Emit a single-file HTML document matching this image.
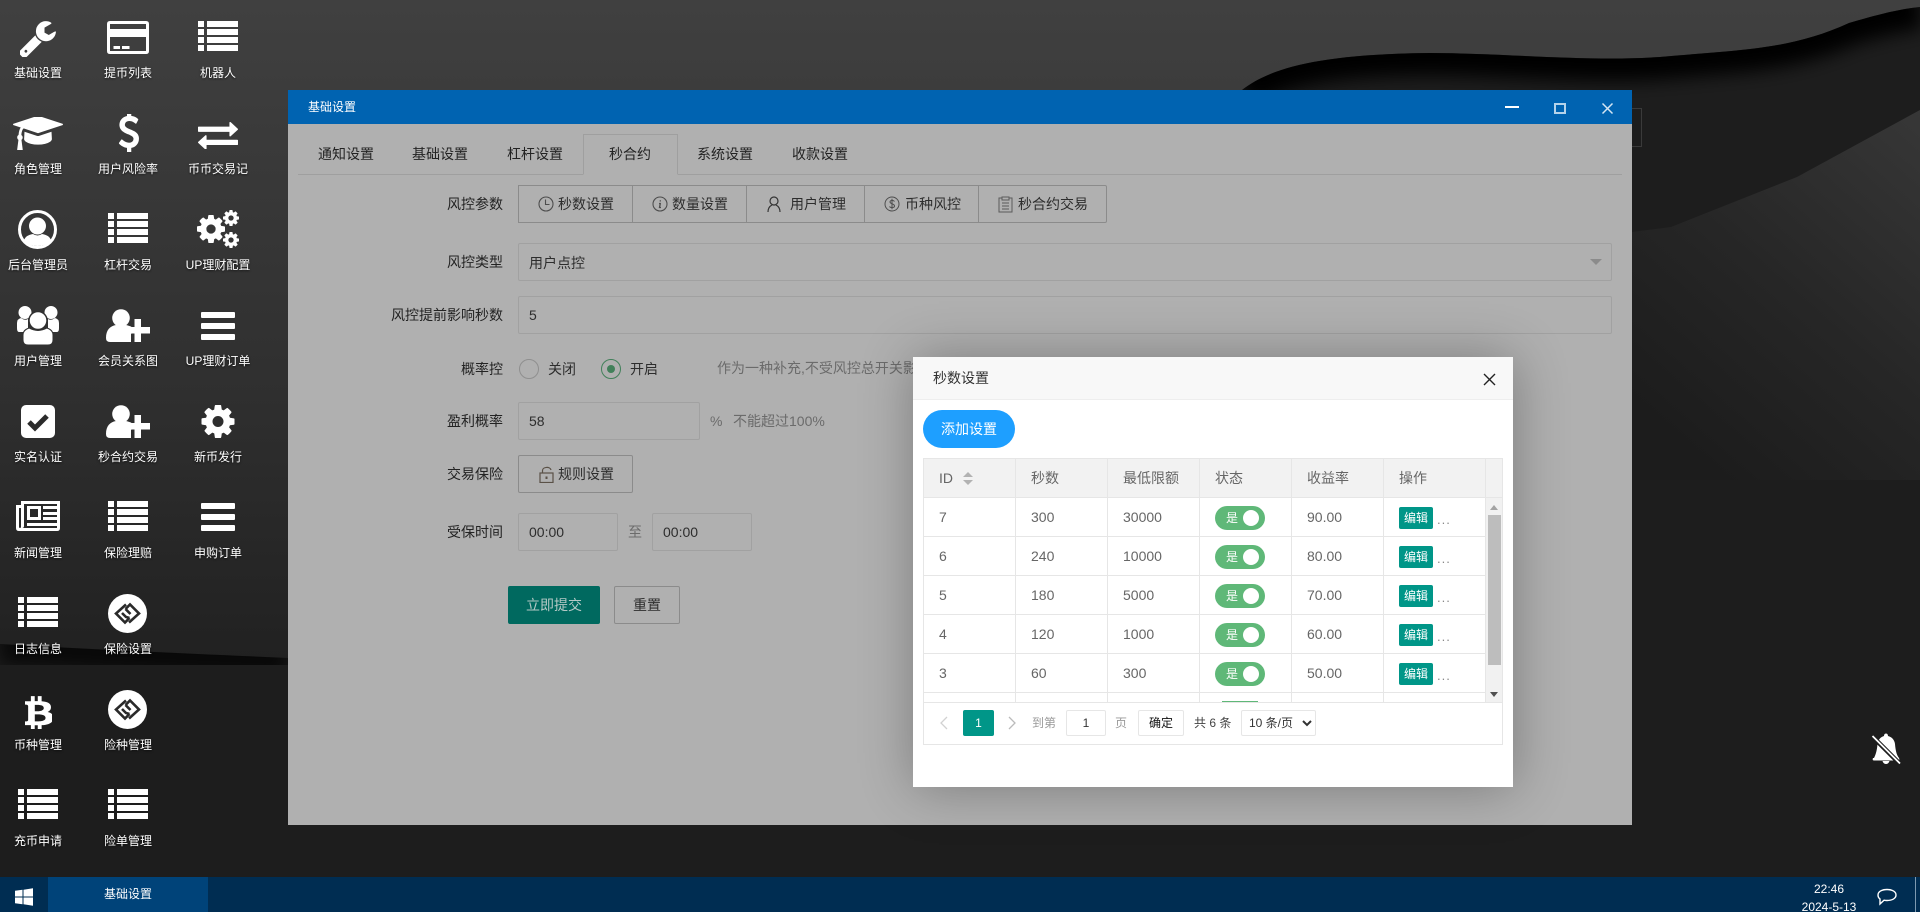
<!DOCTYPE html>
<html lang="zh-CN">
<head>
<meta charset="utf-8">
<title>基础设置</title>
<style>
html,body{margin:0;padding:0;width:1920px;height:912px;overflow:hidden;background:#1c1c1c;}
body{position:relative;font-family:"Liberation Sans","Noto Sans CJK SC",sans-serif;font-size:14px;color:#222;}
div,span,select{box-sizing:border-box;}
.a,.t,.l{position:absolute;}
.t{white-space:nowrap;line-height:20px;height:20px;}
.l{width:90px;text-align:center;font-size:12px;line-height:20px;height:20px;color:#fff;white-space:nowrap;text-shadow:0 1px 2px rgba(0,0,0,.7);}
.lab{color:#232323;width:200px;text-align:right;left:303px;}
.inp{position:absolute;border:1px solid #a1a1a1;height:38px;border-radius:2px;}
.tab{color:#232323;}
.gb{position:absolute;top:185px;height:38px;border:1px solid #8b8b8b;border-left:none;}
.c{position:absolute;color:#666;line-height:20px;height:20px;white-space:nowrap;}
.vl{position:absolute;width:1px;background:#e6e6e6;}
.hl{position:absolute;height:1px;background:#e6e6e6;left:924px;width:562px;}
.sw{position:absolute;left:1215px;width:50px;height:24px;border-radius:20px;background:#5fb878;color:#fff;font-size:12px;line-height:24px;padding-left:11px;}
.sw i{position:absolute;left:28px;top:4px;width:16px;height:16px;border-radius:50%;background:#fff;}
.ed{position:absolute;left:1399px;width:34px;height:22px;border-radius:2px;background:#009688;color:#fff;font-size:12px;line-height:22px;text-align:center;}
.dots{position:absolute;left:1437px;color:#888;font-size:13px;line-height:20px;height:20px;letter-spacing:1px;}
.p12{position:absolute;font-size:12px;line-height:26px;height:26px;white-space:nowrap;}
</style>
</head>
<body>

<!-- wallpaper -->
<svg class="a" style="left:0;top:0" width="1920" height="877" viewBox="0 0 1920 877">
<defs>
<linearGradient id="g1" x1="0" y1="0" x2="0" y2="660" gradientUnits="userSpaceOnUse"><stop offset="0" stop-color="#404040"/><stop offset=".6" stop-color="#2f2f2f"/><stop offset="1" stop-color="#212121"/></linearGradient>
<linearGradient id="g2" x1="1920" y1="110" x2="1650" y2="420" gradientUnits="userSpaceOnUse"><stop offset="0" stop-color="#373737"/><stop offset=".55" stop-color="#262626"/><stop offset="1" stop-color="#1c1c1c"/></linearGradient>
<clipPath id="cp"><path d="M0 644C100 650 200 654 288 658L1100 300L1242 90C1270 68 1320 54 1430 53C1500 53 1590 62 1660 57C1740 50 1790 50 1849 23C1880 14 1900 9 1920 7V877H0Z"/></clipPath>
<filter id="bl" x="-10%" y="-50%" width="120%" height="200%"><feGaussianBlur stdDeviation="9"/></filter>
</defs>
<rect width="1920" height="877" fill="url(#g1)"/>
<path d="M0 644C100 650 200 654 288 658L1100 300L1242 90C1270 68 1320 54 1430 53C1500 53 1590 62 1660 57C1740 50 1790 50 1849 23C1880 14 1900 9 1920 7V877H0Z" fill="#1d1d1d"/>
<g clip-path="url(#cp)">
<path d="M0 644C100 650 200 654 288 658" fill="none" stroke="#000" stroke-width="40" filter="url(#bl)" opacity=".7"/>
<path d="M1242 90C1270 68 1320 54 1430 53C1500 53 1590 62 1660 57C1740 50 1790 50 1849 23C1880 14 1900 9 1920 7" fill="none" stroke="#000" stroke-width="44" filter="url(#bl)"/>
</g>
<path d="M1920 110L1797 177L1671 227L1632 232V480H1920Z" fill="url(#g2)"/>
<rect x="1630" y="108.500" width="11.500" height="38" fill="none" stroke="#3a3a3a"/>
</svg>

<!-- desktop icons -->
<svg class="a" style="left:0;top:0" width="288" height="877" viewBox="0 0 288 877" fill="#fff">
<defs>
<symbol id="list" viewBox="0 0 40 30"><path d="M0 0h6v6H0zM9 0h31v6H9zM0 8h6v6H0zM9 8h31v6H9zM0 16h6v6H0zM9 16h31v6H9zM0 24h6v6H0zM9 24h31v6H9z"/></symbol>
<symbol id="bars" viewBox="0 0 34 28"><rect y="0" width="34" height="6" rx="1"/><rect y="11" width="34" height="6" rx="1"/><rect y="22" width="34" height="6" rx="1"/></symbol>
<symbol id="cog" viewBox="128 128 1536 1536"><path d="M1152 896q0-106-75-181t-181-75-181 75-75 181 75 181 181 75 181-75 75-181zm512-109v222q0 12-8 23t-20 13l-185 28q-19 54-39 91 35 50 107 138 10 12 10 25t-9 23q-27 37-99 108t-94 71q-12 0-26-9l-138-108q-44 23-91 38-16 136-29 186-7 28-36 28h-222q-14 0-24.500-8.500t-11.500-21.500l-28-184q-49-16-90-37l-141 107q-10 9-25 9-14 0-25-11-126-114-165-168-7-10-7-23 0-12 8-23 15-21 51-66.500t54-70.500q-27-50-41-99l-183-27q-13-2-21-12.500t-8-23.500v-222q0-12 8-23t19-13l186-28q14-46 39-92-40-57-107-138-10-12-10-24 0-10 9-23 26-36 98.500-107.500t94.500-71.500q13 0 26 10l138 107q44-23 91-38 16-136 29-186 7-28 36-28h222q14 0 24.500 8.500t11.500 21.500l28 184q49 16 90 37l142-107q9-9 24-9 13 0 25 10 129 119 165 170 7 8 7 22 0 12-8 23-15 21-51 66.500t-54 70.500q26 50 41 98l183 28q13 2 21 12.500t8 23.500z"/></symbol>
<symbol id="uplus" viewBox="0 0 44 33"><circle cx="15" cy="9" r="8.800"/><path d="M0 29C0 21 4 17 10 16Q15 19 20 16C24 17 27 18 29 21L25 25V33H4Q0 33 0 29Z"/><path d="M28.500 10h6.500v8h9v6.500h-9V33H28.500V24.500H20V18h8.500z"/></symbol>
<symbol id="chain" viewBox="0 0 39 39"><circle cx="19.500" cy="19.500" r="19.500"/><g fill="none" stroke="#2a2a2a" stroke-width="2.600"><path d="M18 10.500L8 19.500L17 28.500L21.500 24"/><path d="M21 28.500L31 19.500L22 10.500L17.500 15"/><path d="M17.500 15L22.500 20"/><path d="M14 19L18 23L21.500 24"/></g></symbol>
</defs>

<svg x="20" y="21" width="36" height="36" viewBox="120 120 1610 1610"><path d="M448 1472q0-26-19-45t-45-19-45 19-19 45 19 45 45 19 45-19 19-45zm644-420l-682 682q-37 37-90 37-52 0-91-37l-106-108q-38-36-38-90 0-53 38-91l681-681q39 98 114.500 173.500t173.500 114.500zm634-435q0 39-23 106-47 134-164.500 217.500t-258.500 83.500q-185 0-316.500-131.500t-131.500-316.500 131.500-316.500 316.500-131.500q58 0 121.500 16.500t107.500 46.500q16 11 16 28t-16 28l-293 169v224l193 107q5-3 79-48.500t135.500-81 70.500-35.500q15 0 23.500 10t8.500 25z"/></svg>

<svg x="107" y="21" width="42" height="33" viewBox="0 0 42 33"><path fill-rule="evenodd" d="M3 0h36q3 0 3 3v27q0 3-3 3H3q-3 0-3-3V3q0-3 3-3zM3 3v5h36V3zM3 16v14h36V16z"/><path d="M6.500 25h6.500v3H6.500zM15 25h7.500v3H15z"/></svg>
<use href="#list" x="198" y="21" width="40" height="30"/>

<svg x="13" y="117" width="50" height="33" viewBox="0 128 2304 1536" preserveAspectRatio="none"><path d="M1774 836l18 316q4 69-82 128t-235 93.500-323 34.500-323-34.500-235-93.500-82-128l18-316 574 181q22 7 48 7t48-7zm530-324q0 23-22 31l-1120 352q-4 1-10 1t-10-1l-652-206q-43 34-71 111.500t-34 178.500q63 36 63 109 0 69-58 107l58 433q2 14-8 25-9 11-24 11h-192q-15 0-24-11-10-11-8-25l58-433q-58-38-58-107 0-73 65-111 11-207 98-330l-333-104q-22-8-22-31t22-31l1120-352q4-1 10-1t10 1l1120 352q22 8 22 31z" transform="translate(0,-64) scale(1,1.05)"/></svg>
<svg x="117" y="114" width="22" height="38" viewBox="340 128 1024 1632" preserveAspectRatio="none"><path d="M1362 1185q0 153-99.500 263.500t-258.500 136.500v175q0 14-9 23t-23 9h-135q-13 0-22.500-9.500t-9.500-22.500v-175q-66-9-127.500-31t-101.500-44.500-74-48-46.500-37.500-17.500-18q-17-21-2-41l103-135q7-10 23-12 15-2 24 9l2 2q113 99 243 125 37 8 74 8 81 0 142.500-43t61.500-122q0-28-15-53t-33.500-42-58.500-37.500-66-32-80-32.500q-39-16-61.500-25t-61.500-26.500-62.500-31-56.500-35.500-53.500-42.500-43.500-49-35.500-58-21-66.500-8.500-78q0-138 98-242t255-134v-180q0-13 9.500-22.500t22.500-9.500h135q14 0 23 9t9 23v176q57 6 110.500 23t87 33.500 63.500 37.500 39 29 15 14q17 18 5 38l-81 146q-8 15-23 16-14 3-27-7-3-3-14.500-12t-39-26.500-58.500-32-74.500-26-85.500-11.500q-95 0-155 43t-60 111q0 26 8.500 48t29.500 41.500 39.500 33 56 31 60.500 27 70 27.500q53 20 81 31.500t76 35 75.500 42.500 62 50 53 63.500 31.500 76.500 13 94z"/></svg>
<svg x="198" y="120" width="40" height="29" viewBox="0 192 1792 1408" preserveAspectRatio="none"><path d="M1792 1184v192q0 13-9.500 22.500t-22.500 9.500h-1376v192q0 13-9.500 22.500t-22.500 9.500q-12 0-24-10l-319-320q-9-9-9-22 0-14 9-23l320-320q9-9 23-9 13 0 22.500 9.500t9.500 22.500v192h1376q13 0 22.500 9.500t9.500 22.500zm0-544q0 14-9 23l-320 320q-9 9-23 9-13 0-22.500-9.500t-9.500-22.500v-192h-1376q-13 0-22.500-9.500t-9.500-22.500v-192q0-13 9.500-22.500t22.500-9.500h1376v-192q0-14 9-23t23-9q12 0 24 10l319 319q9 9 9 23z"/></svg>

<svg x="18" y="210" width="39" height="39" viewBox="0 0 39 39"><circle cx="19.500" cy="19.500" r="18" fill="none" stroke="#fff" stroke-width="3"/><circle cx="19.500" cy="16" r="8.500"/><path d="M6 30.500C7 26.500 10 25 15 24Q19.500 27 24 24C29 25 32 26.500 33 30.500C29.500 34 25 36 19.500 36S9.500 34 6 30.500Z"/></svg>
<use href="#list" x="108" y="213" width="40" height="30"/>
<use href="#cog" x="197" y="215" width="28" height="28"/>
<use href="#cog" x="223" y="210" width="16" height="16"/>
<use href="#cog" x="223" y="232" width="16" height="16"/>

<svg x="17" y="306" width="42" height="39" viewBox="0 0 42 39"><circle cx="8" cy="6.500" r="6.500"/><circle cx="34" cy="6.500" r="6.500"/><path d="M0 22V17Q0 13 4 12Q8 15 11 13L11 26H2Q0 26 0 22ZM42 22V17Q42 13 38 12Q34 15 31 13L31 26H40Q42 26 42 22Z"/><circle cx="21" cy="14.500" r="9" stroke="#303030" stroke-width="1.500"/><path d="M6 34V29Q6 24 12 22Q21 27 30 22Q36 24 36 29V34Q36 39 31 39H11Q6 39 6 34Z" stroke="#303030" stroke-width="1"/></svg>
<use href="#uplus" x="106" y="309" width="44" height="33"/>
<use href="#bars" x="201" y="312" width="34" height="28"/>

<svg x="21" y="405" width="34" height="33" viewBox="0 0 34 33"><rect width="34" height="33" rx="5"/><path d="M8 17L14 23L26 11" fill="none" stroke="#2b2b2b" stroke-width="5"/></svg>
<use href="#uplus" x="106" y="405" width="44" height="33"/>
<use href="#cog" x="201" y="405" width="34" height="33"/>

<svg x="16" y="501" width="44" height="30" viewBox="0 0 44 30"><path fill-rule="evenodd" d="M6 0H44V27Q44 30 41 30H3Q0 30 0 27V4H5V0H6ZM8 3V25Q8 27 6 27H41V3ZM3 7V26Q3 27 4 27Q5 27 5 26V7Z"/><path fill-rule="evenodd" d="M11 5H25V19H11ZM14 8V16H22V8Z"/><path d="M27 5H41V8H27ZM27 11H41V14H27ZM27 16H41V19H27ZM11 22H41V25H11Z"/></svg>
<use href="#list" x="108" y="501" width="40" height="30"/>
<use href="#bars" x="201" y="503" width="34" height="28"/>

<use href="#list" x="18" y="597" width="40" height="30"/>
<use href="#chain" x="108" y="594" width="39" height="39"/>

<svg x="25" y="692" width="27" height="37" viewBox="130 0 1080 1792" preserveAspectRatio="none"><path d="M1167 709q18 182-131 258 117 28 175 103t45 214q-7 71-32.500 125t-64.500 89-97 58.500-121.500 34.500-145.500 15v255h-154v-251q-80 0-122-1v252h-154v-255q-18 0-54-.5t-55-.5h-200l31-183h111q50 0 58-51v-402h16q-6-1-16-1v-287q-13-68-89-68h-111v-164l212 1q64 0 97-1v-252h154v247q82-2 122-2v-245h154v252q79 7 140 22.500t113 45 82.500 78 36.500 114.500zm-215 545q0-36-15-64t-37-46-57.500-30.500-65.500-18.500-74-9-69-3-64.500 1-47.500 1v338q8 0 37 .5t48 .5 53-1.500 58.500-4 57-8.500 55.500-14 47.500-21 39.500-30 24.500-40 9.500-51zm-71-476q0-33-12.500-58.500t-30.500-42-48-28-55-16.500-61.500-8-58-2.500-54 1-39.500.5v307q5 0 34.500.5t46.500 0 50-2 55-5.500 51.500-11 48.500-18.500 37-27 27-38.500 9-51z"/></svg>
<use href="#chain" x="108" y="690" width="39" height="39"/>

<use href="#list" x="18" y="789" width="40" height="30"/>
<use href="#list" x="108" y="789" width="40" height="30"/>
</svg>

<div class="l" style="left:-7px;top:63px">基础设置</div><div class="l" style="left:83px;top:63px">提币列表</div><div class="l" style="left:173px;top:63px">机器人</div>
<div class="l" style="left:-7px;top:159px">角色管理</div><div class="l" style="left:83px;top:159px">用户风险率</div><div class="l" style="left:173px;top:159px">币币交易记</div>
<div class="l" style="left:-7px;top:255px">后台管理员</div><div class="l" style="left:83px;top:255px">杠杆交易</div><div class="l" style="left:173px;top:255px">UP理财配置</div>
<div class="l" style="left:-7px;top:351px">用户管理</div><div class="l" style="left:83px;top:351px">会员关系图</div><div class="l" style="left:173px;top:351px">UP理财订单</div>
<div class="l" style="left:-7px;top:447px">实名认证</div><div class="l" style="left:83px;top:447px">秒合约交易</div><div class="l" style="left:173px;top:447px">新币发行</div>
<div class="l" style="left:-7px;top:543px">新闻管理</div><div class="l" style="left:83px;top:543px">保险理赔</div><div class="l" style="left:173px;top:543px">申购订单</div>
<div class="l" style="left:-7px;top:639px">日志信息</div><div class="l" style="left:83px;top:639px">保险设置</div>
<div class="l" style="left:-7px;top:735px">币种管理</div><div class="l" style="left:83px;top:735px">险种管理</div>
<div class="l" style="left:-7px;top:831px">充币申请</div><div class="l" style="left:83px;top:831px">险单管理</div>

<!-- window -->
<div class="a" style="left:288px;top:90px;width:1344px;height:735px;background:#b0b0b0"></div>
<div class="a" style="left:288px;top:90px;width:1344px;height:34px;background:#0063b1"></div>
<div class="t" style="left:308px;top:97px;font-size:12px;color:#fff">基础设置</div>
<div class="a" style="left:1505px;top:106px;width:14px;height:2px;background:#fff"></div>
<div class="a" style="left:1554px;top:103px;width:12px;height:11px;border:2px solid #b5d3ea"></div>
<svg class="a" style="left:1601px;top:102px" width="13" height="13" viewBox="0 0 13 13"><path d="M1.500 1.500L11.500 11.500M11.500 1.500L1.500 11.500" stroke="#d5e6f3" stroke-width="1.500" fill="none"/></svg>

<!-- tabs -->
<div class="a" style="left:298px;top:174px;width:1324px;height:1px;background:#9f9f9f"></div>
<div class="a" style="left:583px;top:134px;width:95px;height:41px;border:1px solid #9f9f9f;border-bottom:1px solid #b0b0b0;background:#b0b0b0"></div>
<div class="t tab" style="left:318px;top:144px">通知设置</div>
<div class="t tab" style="left:412px;top:144px">基础设置</div>
<div class="t tab" style="left:507px;top:144px">杠杆设置</div>
<div class="t tab" style="left:609px;top:144px">秒合约</div>
<div class="t tab" style="left:697px;top:144px">系统设置</div>
<div class="t tab" style="left:792px;top:144px">收款设置</div>

<!-- form -->
<div class="t lab" style="top:194px">风控参数</div>
<div class="a" style="left:518px;top:185px;width:1px;height:38px;background:#8b8b8b"></div>
<div class="gb" style="left:519px;width:114px"></div>
<div class="gb" style="left:633px;width:114px"></div>
<div class="gb" style="left:747px;width:118px"></div>
<div class="gb" style="left:865px;width:114px"></div>
<div class="gb" style="left:979px;width:128px;border-radius:0 2px 2px 0"></div>
<svg class="a" style="left:538px;top:196px" width="16" height="16" viewBox="0 0 16 16" fill="none" stroke="#4d4d4d" stroke-width="1.100"><circle cx="8" cy="8" r="7"/><path d="M7.500 3.500V8.500H11.500"/></svg>
<div class="t" style="left:558px;top:194px;color:#2d2d2d">秒数设置</div>
<svg class="a" style="left:652px;top:196px" width="16" height="16" viewBox="0 0 16 16" fill="none" stroke="#4d4d4d" stroke-width="1.100"><circle cx="8" cy="8" r="7"/><path d="M8.300 4.300V5.500M7 7.500H8.300L7.500 11.500H9" stroke-width="1.300"/></svg>
<div class="t" style="left:672px;top:194px;color:#2d2d2d">数量设置</div>
<svg class="a" style="left:766px;top:196px" width="16" height="16" viewBox="0 0 16 16" fill="none" stroke="#333" stroke-width="1.200"><circle cx="8" cy="5" r="4"/><path d="M2 16C2 12 4 10 6 9M14 16C14 12 12 10 10 9"/></svg>
<div class="t" style="left:790px;top:194px;color:#2d2d2d">用户管理</div>
<svg class="a" style="left:884px;top:196px" width="16" height="16" viewBox="0 0 16 16" fill="none" stroke="#4d4d4d" stroke-width="1"><circle cx="8" cy="8" r="7"/><path d="M10.500 5.500C9.500 4 6 4 6 6C6 8 10.500 7.500 10.500 10C10.500 12 6.500 12 5.500 10.500M8 2.800V13.200"/></svg>
<div class="t" style="left:905px;top:194px;color:#2d2d2d">币种风控</div>
<svg class="a" style="left:998px;top:196px" width="15" height="17" viewBox="0 0 15 17" fill="none" stroke="#5a5a5a" stroke-width="1"><path d="M4 2H1V16H14V2H11M4 1H11V4H4ZM4 7H11M4 10H11M4 13H11"/></svg>
<div class="t" style="left:1018px;top:194px;color:#2d2d2d">秒合约交易</div>

<div class="t lab" style="top:252px">风控类型</div>
<div class="inp" style="left:518px;top:243px;width:1094px"></div>
<div class="t" style="left:529px;top:253px;color:#2d2d2d">用户点控</div>
<div class="a" style="left:1590px;top:259px;border:6px solid transparent;border-top:6px solid #8b8b8b;border-bottom:none"></div>

<div class="t lab" style="top:305px">风控提前影响秒数</div>
<div class="inp" style="left:518px;top:296px;width:1094px"></div>
<div class="t" style="left:529px;top:305px;color:#2d2d2d">5</div>

<div class="t lab" style="top:359px">概率控</div>
<div class="a" style="left:519px;top:359px;width:20px;height:20px;border-radius:50%;border:1.500px solid #8f8f8f"></div>
<div class="t" style="left:548px;top:359px;color:#2d2d2d">关闭</div>
<div class="a" style="left:601px;top:359px;width:20px;height:20px;border-radius:50%;border:1.500px solid #42805a"></div>
<div class="a" style="left:607px;top:365px;width:8px;height:8px;border-radius:50%;background:#42805a"></div>
<div class="t" style="left:630px;top:359px;color:#2d2d2d">开启</div>
<div class="t" style="left:717px;top:358px;color:#6b6b6b;width:200px;overflow:hidden">作为一种补充,不受风控总开关影响</div>

<div class="t lab" style="top:411px">盈利概率</div>
<div class="inp" style="left:518px;top:402px;width:182px"></div>
<div class="t" style="left:529px;top:411px;color:#2d2d2d">58</div>
<div class="t" style="left:710px;top:411px;color:#6b6b6b">%</div>
<div class="t" style="left:733px;top:411px;color:#6b6b6b">不能超过100%</div>

<div class="t lab" style="top:464px">交易保险</div>
<div class="inp" style="left:518px;top:455px;width:115px;border-color:#8b8b8b"></div>
<svg class="a" style="left:539px;top:466px" width="15" height="17" viewBox="0 0 15 17" fill="none" stroke="#5a5147" stroke-width="1.200"><rect x="1" y="7" width="13" height="9.500"/><path d="M3.500 7V4.500C3.500 1 11 0 12 4"/><path d="M7.500 10.500V13" stroke-width="2"/></svg>
<div class="t" style="left:558px;top:464px;color:#2d2d2d">规则设置</div>

<div class="t lab" style="top:522px">受保时间</div>
<div class="inp" style="left:518px;top:513px;width:100px"></div>
<div class="t" style="left:529px;top:522px;color:#2d2d2d">00:00</div>
<div class="t" style="left:628px;top:522px;color:#6b6b6b">至</div>
<div class="inp" style="left:652px;top:513px;width:100px"></div>
<div class="t" style="left:663px;top:522px;color:#2d2d2d">00:00</div>

<div class="a" style="left:508px;top:586px;width:92px;height:38px;border-radius:2px;background:#00695f;color:#b5c9c6;text-align:center;line-height:38px">立即提交</div>
<div class="a" style="left:614px;top:586px;width:66px;height:38px;border-radius:2px;border:1px solid #8b8b8b;color:#2d2d2d;text-align:center;line-height:36px">重置</div>

<!-- modal -->
<div class="a" style="left:913px;top:357px;width:600px;height:430px;background:#fff;box-shadow:1px 1px 50px rgba(0,0,0,.3)"></div>
<div class="a" style="left:913px;top:357px;width:600px;height:43px;background:#f8f8f8;border-bottom:1px solid #eee"></div>
<div class="t" style="left:933px;top:368px;color:#333">秒数设置</div>
<svg class="a" style="left:1483px;top:373px" width="13" height="13" viewBox="0 0 13 13"><path d="M1 1L12 12M12 1L1 12" stroke="#222" stroke-width="1.400" fill="none"/></svg>
<div class="a" style="left:923px;top:410px;width:92px;height:38px;border-radius:19px;background:#1e9fff;color:#fff;text-align:center;line-height:38px">添加设置</div>

<!-- table -->
<div class="a" style="left:923px;top:458px;width:580px;height:287px;border:1px solid #e6e6e6"></div>
<div class="a" style="left:924px;top:459px;width:578px;height:39px;background:#f2f2f2;border-bottom:1px solid #e6e6e6"></div>
<div class="a" style="left:1486px;top:498px;width:16px;height:204px;background:#f1f1f1"></div>
<div class="a" style="left:1488px;top:515px;width:13px;height:150px;background:#bdbdbd"></div>
<div class="a" style="left:1490px;top:505px;border:4px solid transparent;border-bottom:5px solid #a3a3a3;border-top:none"></div>
<div class="a" style="left:1490px;top:692px;border:4px solid transparent;border-top:5px solid #505050;border-bottom:none"></div>

<div class="vl" style="left:1015px;top:459px;height:243px"></div>
<div class="vl" style="left:1107px;top:459px;height:243px"></div>
<div class="vl" style="left:1199px;top:459px;height:243px"></div>
<div class="vl" style="left:1291px;top:459px;height:243px"></div>
<div class="vl" style="left:1383px;top:459px;height:243px"></div>
<div class="vl" style="left:1485px;top:459px;height:243px"></div>
<div class="hl" style="top:536px"></div><div class="hl" style="top:575px"></div><div class="hl" style="top:614px"></div><div class="hl" style="top:653px"></div><div class="hl" style="top:692px"></div>
<div class="a" style="left:924px;top:702px;width:578px;height:1px;background:#e6e6e6"></div>

<div class="c" style="left:939px;top:468px">ID</div>
<div class="a" style="left:963px;top:472px;border:5px solid transparent;border-bottom:5px solid #b2b2b2;border-top:none"></div>
<div class="a" style="left:963px;top:480px;border:5px solid transparent;border-top:5px solid #b2b2b2;border-bottom:none"></div>
<div class="c" style="left:1031px;top:468px">秒数</div>
<div class="c" style="left:1123px;top:468px">最低限额</div>
<div class="c" style="left:1215px;top:468px">状态</div>
<div class="c" style="left:1307px;top:468px">收益率</div>
<div class="c" style="left:1399px;top:468px">操作</div>

<div class="c" style="left:939px;top:507px">7</div><div class="c" style="left:1031px;top:507px">300</div><div class="c" style="left:1123px;top:507px">30000</div><div class="sw" style="top:506px">是<i></i></div><div class="c" style="left:1307px;top:507px">90.00</div><div class="ed" style="top:507px">编辑</div><div class="dots" style="top:510px">...</div>
<div class="c" style="left:939px;top:546px">6</div><div class="c" style="left:1031px;top:546px">240</div><div class="c" style="left:1123px;top:546px">10000</div><div class="sw" style="top:545px">是<i></i></div><div class="c" style="left:1307px;top:546px">80.00</div><div class="ed" style="top:546px">编辑</div><div class="dots" style="top:549px">...</div>
<div class="c" style="left:939px;top:585px">5</div><div class="c" style="left:1031px;top:585px">180</div><div class="c" style="left:1123px;top:585px">5000</div><div class="sw" style="top:584px">是<i></i></div><div class="c" style="left:1307px;top:585px">70.00</div><div class="ed" style="top:585px">编辑</div><div class="dots" style="top:588px">...</div>
<div class="c" style="left:939px;top:624px">4</div><div class="c" style="left:1031px;top:624px">120</div><div class="c" style="left:1123px;top:624px">1000</div><div class="sw" style="top:623px">是<i></i></div><div class="c" style="left:1307px;top:624px">60.00</div><div class="ed" style="top:624px">编辑</div><div class="dots" style="top:627px">...</div>
<div class="c" style="left:939px;top:663px">3</div><div class="c" style="left:1031px;top:663px">60</div><div class="c" style="left:1123px;top:663px">300</div><div class="sw" style="top:662px">是<i></i></div><div class="c" style="left:1307px;top:663px">50.00</div><div class="ed" style="top:663px">编辑</div><div class="dots" style="top:666px">...</div>
<div class="a" style="left:1215px;top:701px;width:50px;height:1px;background:#5fb878;clip-path:inset(0 7px)"></div>

<!-- pager -->
<svg class="a" style="left:939px;top:716px" width="10" height="14" viewBox="0 0 10 14"><path d="M8 1L2 7L8 13" fill="none" stroke="#d2d2d2" stroke-width="1.300"/></svg>
<div class="p12" style="left:963px;top:710px;width:31px;background:#009688;color:#fff;text-align:center;border-radius:2px">1</div>
<svg class="a" style="left:1007px;top:716px" width="10" height="14" viewBox="0 0 10 14"><path d="M2 1L8 7L2 13" fill="none" stroke="#bbb" stroke-width="1.300"/></svg>
<div class="p12" style="left:1032px;top:710px;color:#999">到第</div>
<div class="p12" style="left:1066px;top:710px;width:40px;border:1px solid #e6e6e6;border-radius:2px;text-align:center;line-height:24px;color:#333">1</div>
<div class="p12" style="left:1115px;top:710px;color:#999">页</div>
<div class="p12" style="left:1138px;top:710px;width:46px;border:1px solid #e6e6e6;border-radius:2px;text-align:center;line-height:24px;color:#111">确定</div>
<div class="p12" style="left:1194px;top:710px;color:#444">共 6 条</div>
<select class="a" style="left:1241px;top:710px;width:75px;height:26px;border:1px solid #e6e6e6;border-radius:2px;background:#fff;font:12px 'Liberation Sans','Noto Sans CJK SC',sans-serif;color:#333;padding:0 0 0 3px"><option>10 条/页</option></select>

<!-- bell -->
<svg class="a" style="left:1871px;top:732px" width="30" height="34" viewBox="0 0 30 34"><path d="M15 1.500C16.500 1.500 17 3 17 4C21 5 23.500 8 24 12C24.500 18 25.500 23 28 26H3C5 22 6 18 6.500 12C7 8 9.500 5 13 4C13 3 13.500 1.500 15 1.500Z" fill="#fff"/><path d="M2 26H28Q29 28.500 27 28.500H3Q1 28.500 2 26ZM11.500 29H18.500Q17.500 32 15 32T11.500 29Z" fill="#fff"/><path d="M2 5L28 31" stroke="#1c1c1c" stroke-width="4.500"/><path d="M1.500 4L29 31.500" stroke="#fff" stroke-width="1.800"/></svg>

<!-- taskbar -->
<div class="a" style="left:0;top:877px;width:1920px;height:35px;background:#002d52"></div>
<div class="a" style="left:48px;top:877px;width:160px;height:35px;background:#004379;color:#fff;text-align:center;font-size:12px;line-height:35px">基础设置</div>
<svg class="a" style="left:15px;top:888px" width="18" height="18" viewBox="0 0 18 18" fill="#fff"><path d="M0 2.800L7.500 1.800V8.500H0ZM8.500 1.700L18 .300V8.500H8.500ZM0 9.500H7.500V16.200L0 15.200ZM8.500 9.500H18V17.700L8.500 16.300Z"/></svg>
<div class="a" style="left:1769px;top:879px;width:120px;text-align:center;color:#fff;font-size:12px;line-height:20px">22:46</div>
<div class="a" style="left:1769px;top:897px;width:120px;text-align:center;color:#fff;font-size:12px;line-height:20px">2024-5-13</div>
<svg class="a" style="left:1877px;top:888px" width="20" height="18" viewBox="0 0 20 18"><path d="M10 1.500C15 1.500 19 3.500 19 7C19 10.500 15 12.500 10 12.500C8.500 12.500 7.500 12.300 7 12.200L3 16V11C1.500 10 1 8.500 1 7C1 3.500 5 1.500 10 1.500Z" fill="none" stroke="#fff" stroke-width="1.400"/></svg>
<div class="a" style="left:1915px;top:877px;width:1px;height:35px;background:#7d99b0"></div>

</body>
</html>
